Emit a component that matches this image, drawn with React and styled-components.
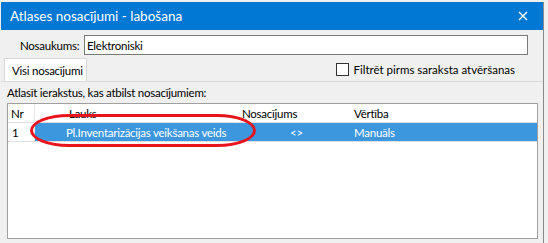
import React from "react";
import styled, { createGlobalStyle } from "styled-components";

const Global = createGlobalStyle`
  html, body { margin: 0; padding: 0; background: #f0f0f0; }
  body { font-family: Lato, "Noto Sans", sans-serif; font-size: 11.5px; letter-spacing: -0.25px; color: #000; }
  #root { width: 548px; height: 243px; overflow: hidden; }
`;

const Window = styled.div`
  margin: 2px 0 0 1px;
  width: 542px;
  height: 241px;
  border-right: 1px solid #8a8a8a;
  background: #f0f0f0;
  display: flex;
  flex-direction: column;
`;

const TitleBar = styled.div`
  height: 28px;
  flex-shrink: 0;
  background: #0078d4;
  color: #fff;
  display: flex;
  align-items: center;
  justify-content: space-between;
  padding: 0 15px 0 9px;
  font-size: 13.5px;
  letter-spacing: 0;
`;

const Body = styled.div`
  padding: 5px 0 0 0;
  display: flex;
  flex-direction: column;
  flex: 1;
`;

const NameRow = styled.div`
  display: flex;
  align-items: center;
  height: 20px;
  padding-left: 19px;
  white-space: nowrap;
`;

const Label = styled.span`
  width: 64px;
  flex-shrink: 0;
`;

const Input = styled.div`
  width: 440px;
  height: 18px;
  border: 1px solid #7a7a7a;
  background: #fff;
  display: flex;
  align-items: center;
  padding-left: 2px;
`;

const TabRow = styled.div`
  display: flex;
  justify-content: space-between;
  align-items: flex-end;
  height: 24px;
  margin-top: 2px;
  padding-left: 3px;
  white-space: nowrap;
`;

const Tab = styled.div`
  width: 83px;
  height: 23px;
  background: #fff;
  border: 1px solid #d9d9d9;
  border-bottom: none;
  display: flex;
  align-items: center;
  padding-left: 7px;
  box-sizing: border-box;
`;

const CheckWrap = styled.label`
  display: flex;
  align-items: center;
  gap: 4px;
  height: 22px;
  margin-right: 28px;
  align-self: center;
  letter-spacing: 0;
`;

const Box = styled.span`
  width: 11px;
  height: 11px;
  border: 1px solid #333;
  background: #fff;
`;

const Panel = styled.div`
  flex: 1;
  border-top: 1px solid #d9d9d9;
  padding: 4px 5px 0 6px;
  display: flex;
  flex-direction: column;
`;

const Caption = styled.div`
  height: 16px;
  white-space: nowrap;
`;

const Grid = styled.div`
  position: relative;
  margin-top: 1px;
  width: 531px;
  height: 136px;
  box-sizing: border-box;
  background: #fff;
  border: 1px solid #a0a0a0;
`;

const Row = styled.div`
  display: grid;
  grid-template-columns: 27px 204px 112px 1fr;
  height: 18px;
  border-bottom: 1px solid #e0e0e0;
`;

const Cell = styled.div`
  display: flex;
  align-items: center;
  padding-left: ${(p) => p.$pad || 3}px;
  color: ${(p) => (p.$sel ? "#fff" : "#000")};
  background: ${(p) => (p.$sel ? "#3c97df" : "transparent")};
  border-right: ${(p) => (p.$line ? "1px solid #e6e6e6" : "none")};
  white-space: nowrap;
`;

const Mark = styled.div`
  position: absolute;
  left: 22px;
  top: 10px;
  width: 226px;
  height: 33px;
  box-sizing: border-box;
  border: 3px solid #e8141c;
  border-radius: 40px / 17px;
  pointer-events: none;
`;

export default function App() {
  return (
    <>
      <Global />
      <Window>
        <TitleBar>
          <span>Atlases nosacījumi - labošana</span>
          <svg width="10" height="10" viewBox="0 0 10 10">
            <path d="M1 1 L9 9 M9 1 L1 9" stroke="#fff" strokeWidth="1.4" />
          </svg>
        </TitleBar>
        <Body>
          <NameRow>
            <Label>Nosaukums:</Label>
            <Input>Elektroniski</Input>
          </NameRow>
          <TabRow>
            <Tab>Visi nosacījumi</Tab>
            <CheckWrap>
              <Box />
              <span>Filtrēt pirms saraksta atvēršanas</span>
            </CheckWrap>
          </TabRow>
          <Panel>
            <Caption>Atlasīt ierakstus, kas atbilst nosacījumiem:</Caption>
            <Grid>
              <Row>
                <Cell $line>Nr</Cell>
                <Cell $pad={34}>Lauks</Cell>
                <Cell $pad={3}>Nosacījums</Cell>
                <Cell $pad={3}>Vērtība</Cell>
              </Row>
              <Row>
                <Cell $pad={4} $line>1</Cell>
                <Cell $sel $pad={31}>Pl.Inventarizācijas veikšanas veids</Cell>
                <Cell $sel $pad={51}>&lt;&gt;</Cell>
                <Cell $sel $pad={3}>Manuāls</Cell>
              </Row>
              <Mark />
            </Grid>
          </Panel>
        </Body>
      </Window>
    </>
  );
}
